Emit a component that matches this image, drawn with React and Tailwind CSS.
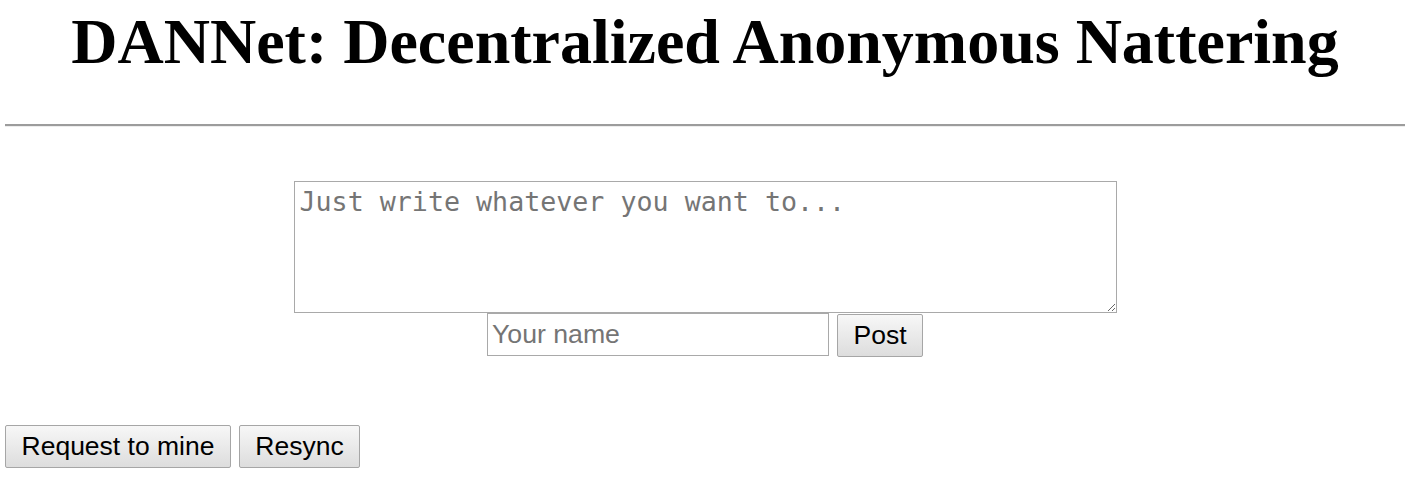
import React from 'react';

const btn =
  'h-[43px] px-[15px] border border-[#a6a6a6] rounded-[2px] bg-gradient-to-b from-[#f7f7f7] to-[#dddddd] text-black text-[26.5px] leading-none';

const App = () => {
  return (
    <div className="pl-[5px] pr-[7px] bg-white min-h-[504px] font-['Liberation_Sans',Arial,sans-serif]">
      <h1 className="pt-[6px] text-center font-bold text-[64px] leading-[71px] font-['Liberation_Serif','Times_New_Roman',serif] text-black">
        DANNet: Decentralized Anonymous Nattering
      </h1>
      <div className="mt-[47px] border-t-2 border-t-[#9c9c9c] border-b border-b-[#ededed]" />
      <div className="mt-[54px] flex flex-col items-center">
        <textarea
          placeholder="Just write whatever you want to..."
          className="block w-[823px] h-[132px] pt-[4px] pb-[4px] pl-[5px] pr-[4px] border border-[#a9a9a9] text-[26.67px] leading-[31px] font-['DejaVu_Sans_Mono',monospace] placeholder:text-[#757575] outline-none"
        />
        <div className="flex items-start gap-[8px]">
          <input
            type="text"
            placeholder="Your name"
            className="w-[342px] h-[43px] px-[4px] border border-[#a9a9a9] text-[26.67px] placeholder:text-[#757575] outline-none"
          />
          <button className={btn + ' mt-[1px] h-[42px] w-[86px] px-0'}>Post</button>
        </div>
      </div>
      <div className="mt-[68px] flex gap-[8px]">
        <button className={btn + ' w-[226px] px-0'}>Request to mine</button>
        <button className={btn + ' w-[121px] px-0'}>Resync</button>
      </div>
    </div>
  );
};

export default App;
